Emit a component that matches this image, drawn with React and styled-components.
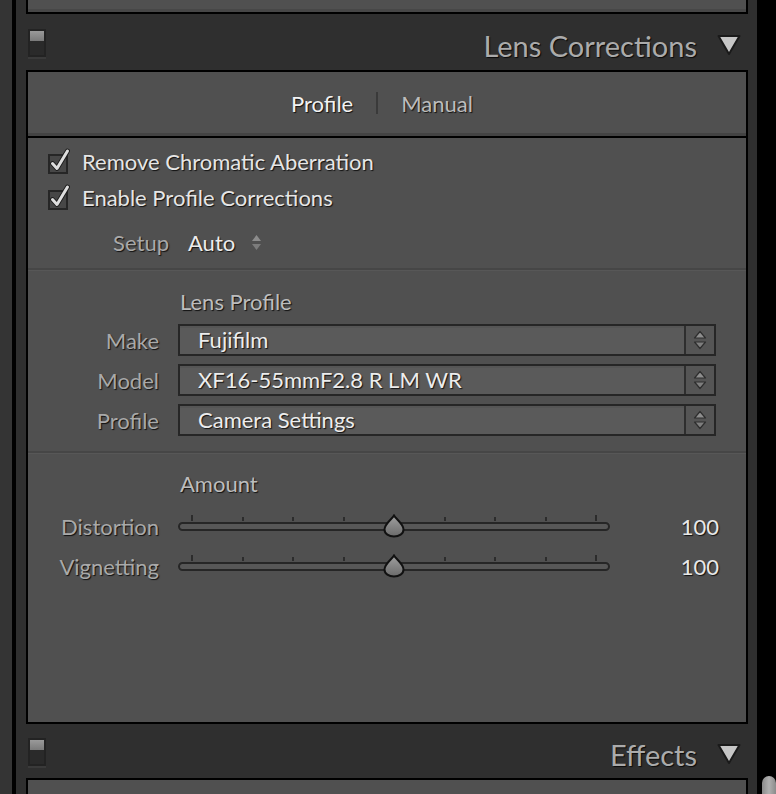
import styled, {createGlobalStyle} from "styled-components";

const GlobalStyle = createGlobalStyle`
	html, body {
		margin: 0;
		padding: 0;
		background: #000;
		overflow: hidden;
	}
	* {
		box-sizing: border-box;
	}
`;

const Screen = styled.div`
	display: flex;
	width: 776px;
	height: 794px;
	overflow: hidden;
	font-family: Lato, "Open Sans", sans-serif;
	text-shadow: 1px 1px 1px rgba(0, 0, 0, 0.8);
`;

const LeftRail = styled.div`
	width: 12px;
	background: #343434;
	border-right: 4px solid #000;
	flex: 0 0 16px;
`;

const Column = styled.div`
	flex: 0 0 741px;
	display: flex;
	flex-direction: column;
	background: #2f2f2f;
	padding: 0 9px 0 10px;
`;

const RightRail = styled.div`
	flex: 1;
	background: #000;
	display: flex;
	flex-direction: column;
	justify-content: flex-end;
`;

const ScrollThumb = styled.div`
	height: 18px;
	margin-left: 5px;
	border-radius: 7px 7px 0 0;
	background: linear-gradient(to right, #8a8a8a, #b0b0b0 50%, #8a8a8a);
`;

const PanelTail = styled.div`
	height: 14px;
	flex: 0 0 14px;
	background: #505050;
	border: 2px solid #000;
	border-top: none;
	box-shadow: inset 0 -3px 0 #474747;
`;

const PanelHead = styled.div`
	display: flex;
	align-items: center;
	height: ${(p) => p.$height}px;
	flex: 0 0 ${(p) => p.$height}px;
	padding: 0 7px 0 2px;
`;

const Toggle = styled.div`
	width: 18px;
	height: 28px;
	border: 2px solid #232323;
	background: #2a2a2a;
	box-shadow: 0 2px 0 #3a3a3a;
	margin-top: 2px;

	&::before {
		content: "";
		display: block;
		height: 10px;
		background: linear-gradient(#9a9a9a, #7a7a7a);
	}
`;

const HeadTitle = styled.div`
	margin-left: auto;
	font-size: 29px;
	color: #ababab;
	padding-top: 6px;
`;

const Caret = styled.svg`
	margin-left: 20px;
	margin-top: 6px;
`;

const Panel = styled.div`
	height: ${(p) => p.$height}px;
	flex: 0 0 ${(p) => p.$height}px;
	background: #505050;
	border: 2px solid #000;
	${(p) => (p.$open ? "border-bottom: none;" : "")}
	display: flex;
	flex-direction: column;
`;

const TabBar = styled.div`
	height: 66px;
	flex: 0 0 66px;
	display: flex;
	align-items: center;
	justify-content: center;
	gap: 23px;
	font-size: 22px;
	border-bottom: 2px solid #000;
	box-shadow: inset 0 -3px 0 #434343;
	padding-right: 10px;
	padding-bottom: 2px;
`;

const Tab = styled.span`
	color: ${(p) => (p.$active ? "#f2f2f2" : "#bcbcbc")};
`;

const TabSep = styled.span`
	width: 2px;
	height: 22px;
	background: #3a3a3a;
`;

const Section = styled.div`
	padding: ${(p) => p.$pad};
	border-bottom: ${(p) => (p.$last ? "none" : "2px solid #464646")};
	box-shadow: ${(p) => (p.$last ? "none" : "0 1px 0 #575757")};
`;

const CheckRow = styled.div`
	display: flex;
	align-items: center;
	height: 36px;
	padding-left: 19px;
	gap: 11px;
	font-size: 22px;
	color: #e6e6e6;
`;

const SetupRow = styled.div`
	display: grid;
	grid-template-columns: 141px auto auto;
	justify-content: start;
	align-items: center;
	column-gap: 19px;
	height: 36px;
	margin-top: 9px;
	font-size: 22px;
`;

const Label = styled.div`
	text-align: right;
	color: #a9a9a9;
	font-size: 22px;
`;

const Value = styled.div`
	color: #ececec;
	display: flex;
	align-items: center;
	gap: 16px;
`;

const FormGrid = styled.div`
	display: grid;
	grid-template-columns: 131px 538px;
	column-gap: 19px;
	row-gap: 8px;
	align-items: center;
`;

const SubHead = styled.div`
	grid-column: 2;
	height: ${(p) => p.$height}px;
	line-height: ${(p) => p.$height}px;
	font-size: 22px;
	color: #bdbdbd;
	padding-left: 2px;
	margin-bottom: ${(p) => p.$gap}px;
`;

const Dropdown = styled.div`
	height: 32px;
	display: flex;
	border: 2px solid #262626;
	background: #5a5a5a;
	box-shadow: inset 0 2px 0 #555;
`;

const DropText = styled.div`
	flex: 1;
	padding-left: 18px;
	font-size: 22px;
	line-height: 28px;
	color: #ededed;
	white-space: nowrap;
`;

const DropButton = styled.div`
	width: 30px;
	border-left: 2px solid #2e2e2e;
	background: #555;
	display: flex;
	align-items: center;
	justify-content: center;
`;

const SliderGrid = styled.div`
	display: grid;
	grid-template-columns: 131px 432px 1fr;
	column-gap: 19px;
	row-gap: 4px;
	align-items: center;
	padding-right: 27px;
`;

const SliderBox = styled.div`
	position: relative;
	height: 36px;
`;

const Ticks = styled.div`
	position: absolute;
	left: 13px;
	right: 13px;
	top: 7px;
	height: 6px;
	display: flex;
	justify-content: space-between;
	align-items: flex-end;
`;

const Tick = styled.span`
	width: 2px;
	height: ${(p) => (p.$end ? 6 : 4)}px;
	background: #2c2c2c;
`;

const Track = styled.div`
	position: absolute;
	left: 0;
	right: 0;
	top: 14px;
	height: 9px;
	border: 2px solid #262626;
	border-radius: 5px;
	background: #575757;
`;

const Thumb = styled.svg`
	position: absolute;
	top: 6px;
	transform: translateX(-50%);
`;

const Number = styled.div`
	text-align: right;
	color: #e8e8e8;
	font-size: 22px;
`;

function Checkbox() {
	return (
		<svg width="24" height="26" viewBox="0 0 24 26">
			<rect x="2" y="7" width="18" height="18" fill="#474747" stroke="#262626" strokeWidth="2" />
			<path d="M5.5 15.5 L10 20.5 L20.5 3" fill="none" stroke="#1c1c1c" strokeWidth="4.8" strokeLinecap="round" strokeLinejoin="round" />
			<path d="M5.5 15.5 L10 20.5 L20.5 3" fill="none" stroke="#dedede" strokeWidth="3" strokeLinecap="round" strokeLinejoin="round" />
		</svg>
	);
}

function SmallArrows() {
	return (
		<svg width="11" height="17" viewBox="0 0 11 17">
			<path d="M5.5 1 L10 7 L1 7 Z" fill="#8c8c8c" />
			<path d="M5.5 16 L10 10 L1 10 Z" fill="#7c7c7c" />
		</svg>
	);
}

function StepArrows() {
	return (
		<svg width="14" height="20" viewBox="0 0 14 20">
			<path d="M7 1.5 L12.5 8 L1.5 8 Z" fill="#8e8e8e" stroke="#2e2e2e" strokeWidth="1.2" strokeLinejoin="round" />
			<path d="M7 18.5 L12.5 12 L1.5 12 Z" fill="#7e7e7e" stroke="#2e2e2e" strokeWidth="1.2" strokeLinejoin="round" />
		</svg>
	);
}

function Header({title, height}) {
	return (
		<PanelHead $height={height}>
			<Toggle />
			<HeadTitle>{title}</HeadTitle>
			<Caret width="24" height="22" viewBox="0 0 24 22">
				<path d="M1.5 2 L22.5 2 L12 20 Z" fill="#c6c6c6" stroke="#1a1a1a" strokeWidth="2" strokeLinejoin="round" />
			</Caret>
		</PanelHead>
	);
}

function Slider({label, value, min = 0, max = 200}) {
	const pct = ((value - min) / (max - min)) * 100;
	const ticks = Array.from({length: 9}, (_, i) => i);
	return (
		<>
			<Label>{label}</Label>
			<SliderBox>
				<Ticks>
					{ticks.map((i) => (
						<Tick key={i} $end={i === 0 || i === ticks.length - 1} />
					))}
				</Ticks>
				<Track />
				<Thumb width="22" height="24" viewBox="0 0 22 24" style={{left: `${pct}%`}}>
					<defs>
						<linearGradient id="thumbFill" x1="0" y1="0" x2="0" y2="1">
							<stop offset="0" stopColor="#a0a0a0" />
							<stop offset="1" stopColor="#6a6a6a" />
						</linearGradient>
					</defs>
					<path d="M11 1.5 C13 5 20.5 10 20.5 15.5 C20.5 20 16 22.5 11 22.5 C6 22.5 1.5 20 1.5 15.5 C1.5 10 9 5 11 1.5 Z" fill="url(#thumbFill)" stroke="#111" strokeWidth="2" />
				</Thumb>
			</SliderBox>
			<Number>{value}</Number>
		</>
	);
}

const lensFields = [
	{label: "Make", value: "Fujifilm"},
	{label: "Model", value: "XF16-55mmF2.8 R LM WR"},
	{label: "Profile", value: "Camera Settings"},
];

const App = () => {
	return (
		<>
			<GlobalStyle />
			<Screen>
				<LeftRail />
				<Column>
					<PanelTail />
					<Header title="Lens Corrections" height={56} />
					<Panel $height={654}>
						<TabBar>
							<Tab $active>Profile</Tab>
							<TabSep />
							<Tab>Manual</Tab>
						</TabBar>

						<Section $pad="5px 0 8px 0">
							<CheckRow>
								<Checkbox />
								Remove Chromatic Aberration
							</CheckRow>
							<CheckRow>
								<Checkbox />
								Enable Profile Corrections
							</CheckRow>
							<SetupRow>
								<Label>Setup</Label>
								<Value>
									Auto
									<SmallArrows />
								</Value>
							</SetupRow>
						</Section>

						<Section $pad="14px 0 15px 0">
							<FormGrid>
								<SubHead $height={36} $gap={-4}>Lens Profile</SubHead>
								{lensFields.map((f) => [
									<Label key={f.label}>{f.label}</Label>,
									<Dropdown key={f.label + "-dd"}>
										<DropText>{f.value}</DropText>
										<DropButton>
											<StepArrows />
										</DropButton>
									</Dropdown>,
								])}
							</FormGrid>
						</Section>

						<Section $pad="15px 0 0 0" $last>
							<SliderGrid>
								<SubHead $height={32} $gap={4}>Amount</SubHead>
								<span />
								<Slider label="Distortion" value={100} />
								<Slider label="Vignetting" value={100} />
							</SliderGrid>
						</Section>
					</Panel>
					<Header title="Effects" height={54} />
					<Panel $height={20} $open />
				</Column>
				<RightRail>
					<ScrollThumb />
				</RightRail>
			</Screen>
		</>
	);
};

export default App;
